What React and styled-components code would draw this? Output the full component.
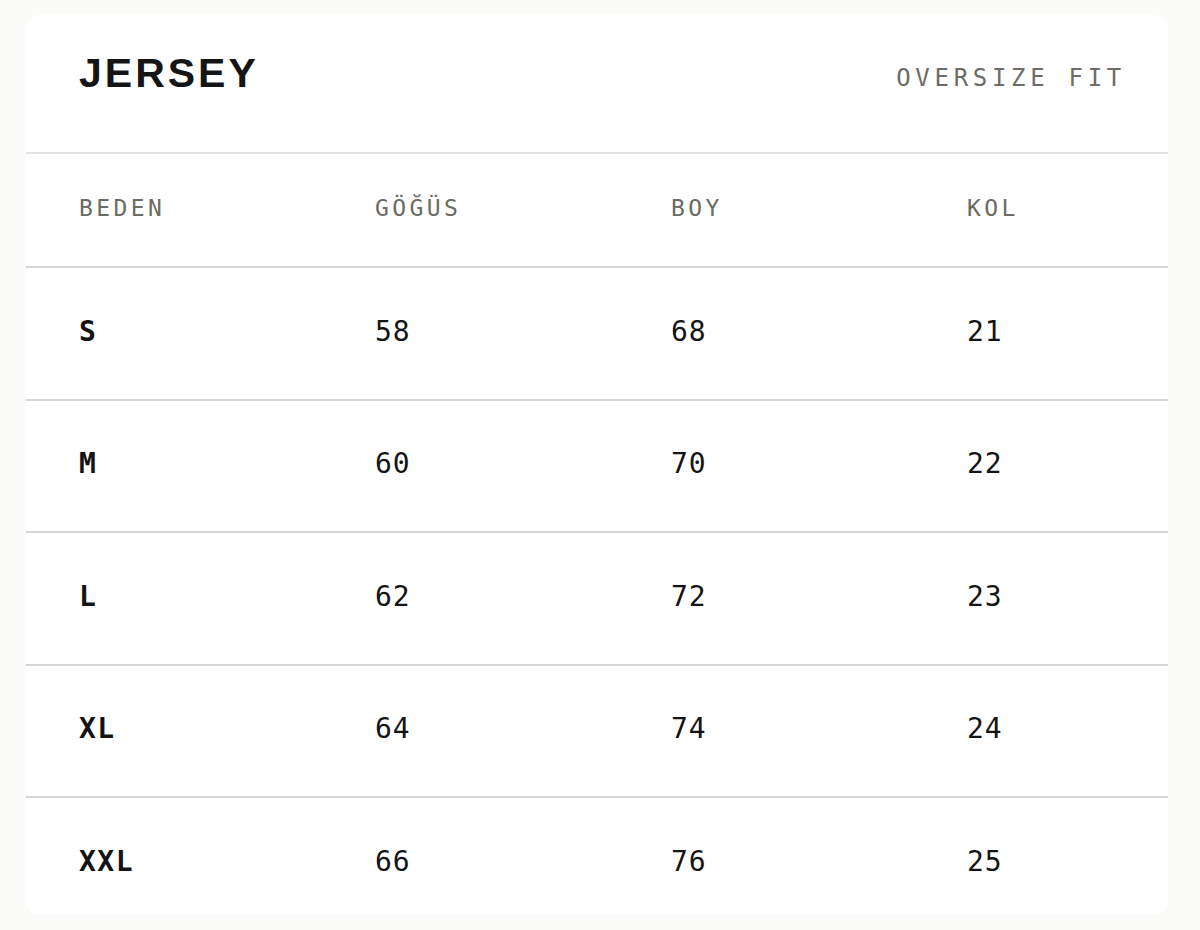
import React from 'react';
import styled, { createGlobalStyle } from 'styled-components';

const GlobalStyle = createGlobalStyle`
  html, body {
    margin: 0;
    padding: 0;
    background: #fbfbfa;
  }
`;

const Card = styled.div`
  margin: 15px 32px 0 26px;
  background: #fff;
  border-radius: 14px;
  overflow: hidden;
  height: 900px;
`;

const Head = styled.div`
  height: 137px;
  display: flex;
  justify-content: space-between;
  align-items: flex-start;
  padding: 0 42px 0 53px;
  border-bottom: 2px solid #e3e3e3;
`;

const Title = styled.h1`
  margin: 35px 0 0;
  font-family: 'Liberation Sans', Arial, sans-serif;
  font-weight: 700;
  font-size: 41px;
  line-height: 46px;
  letter-spacing: 3px;
  color: #151515;
`;

const Fit = styled.div`
  margin-top: 48px;
  font-family: 'DejaVu Sans Mono', monospace;
  font-size: 24px;
  line-height: 30px;
  letter-spacing: 4.7px;
  color: #6d6c66;
`;

const Row = styled.div`
  display: grid;
  grid-template-columns: repeat(4, 296px);
  padding: 0 0 4px 53px;
  height: ${(p) => p.$h}px;
  align-items: center;
  border-bottom: ${(p) => (p.$last ? 'none' : '2px solid #d6d6d6')};
  box-sizing: border-box;
`;

const Label = styled.div`
  font-family: 'DejaVu Sans Mono', monospace;
  font-size: 23px;
  letter-spacing: 3.4px;
  color: #6b6a63;
`;

const Cell = styled.div`
  font-family: 'DejaVu Sans Mono', monospace;
  font-size: 28px;
  letter-spacing: ${(p) => (p.$bold ? '1.5px' : '1px')};
  font-weight: ${(p) => (p.$bold ? 700 : 400)};
  color: #141414;
`;

const sizes = [
  ['S', 58, 68, 21],
  ['M', 60, 70, 22],
  ['L', 62, 72, 23],
  ['XL', 64, 74, 24],
  ['XXL', 66, 76, 25],
];

export default function App() {
  return (
    <>
      <GlobalStyle />
      <Card>
        <Head>
          <Title>JERSEY</Title>
          <Fit>OVERSIZE FIT</Fit>
        </Head>
        <Row $h={114}>
          <Label>BEDEN</Label>
          <Label>GÖĞÜS</Label>
          <Label>BOY</Label>
          <Label>KOL</Label>
        </Row>
        {sizes.map((s, i) => (
          <Row key={s[0]} $h={i === sizes.length - 1 ? 130 : 132.5} $last={i === sizes.length - 1}>
            <Cell $bold>{s[0]}</Cell>
            <Cell>{s[1]}</Cell>
            <Cell>{s[2]}</Cell>
            <Cell>{s[3]}</Cell>
          </Row>
        ))}
      </Card>
    </>
  );
}
